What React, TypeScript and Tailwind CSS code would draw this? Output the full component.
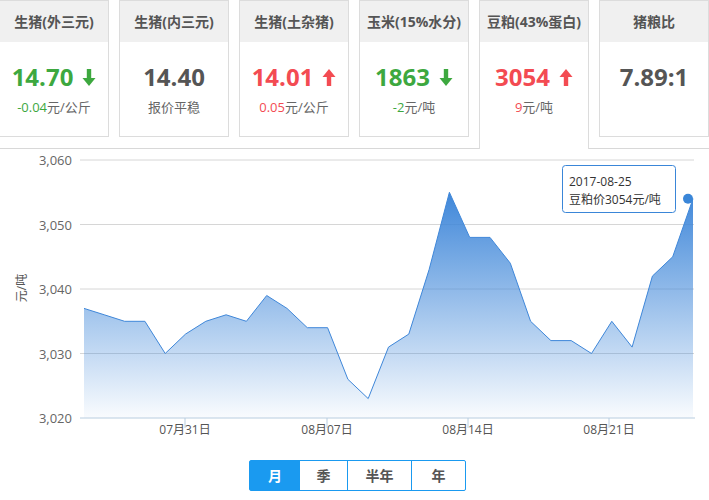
import React from "react";

const cards = [
  { t: "生猪(外三元)", v: "14.70", s: "-0.04", u: "元/公斤", c: "text-[#3da83f]", a: "down" },
  { t: "生猪(内三元)", v: "14.40", s: "", u: "报价平稳", c: "text-[#555]", a: "" },
  { t: "生猪(土杂猪)", v: "14.01", s: "0.05", u: "元/公斤", c: "text-[#f34b52]", a: "up" },
  { t: "玉米(15%水分)", v: "1863", s: "-2", u: "元/吨", c: "text-[#3da83f]", a: "down" },
  { t: "豆粕(43%蛋白)", v: "3054", s: "9", u: "元/吨", c: "text-[#f34b52]", a: "up", sel: true },
  { t: "猪粮比", v: "7.89:1", s: "", u: "", c: "text-[#555]", a: "" },
];

const vals = [3037,3036,3035,3035,3030,3033,3035,3036,3035,3039,3037,3034,3034,3026,3023,3031,3033,3043,3055,3048,3048,3044,3035,3032,3032,3030,3035,3031,3042,3045,3054];

function Arrow({ dir, color }: { dir: string; color: string }) {
  const up = dir === "up";
  return (
    <svg width="14" height="19" viewBox="0 0 14 19" className="ml-[9px]">
      {up ? (
        <path d="M7 1 L13.5 9 H9.2 V18 H4.8 V9 H0.5 Z" fill={color} />
      ) : (
        <path d="M7 18 L13.5 10 H9.2 V1 H4.8 V10 H0.5 Z" fill={color} />
      )}
    </svg>
  );
}

export default function App() {
  const X = (i: number) => 84 + i * 20.3;
  const Y = (v: number) => 160 + (3060 - v) * 6.45;
  const pts = vals.map((v, i) => `${X(i).toFixed(1)},${Y(v).toFixed(1)}`).join(" ");
  const area = `M${X(0)},418 L${pts.split(" ").join(" L")} L${X(30)},418 Z`;
  return (
    <div className="w-[709px] h-[500px] bg-white relative overflow-hidden" style={{ fontFamily: '"Open Sans","Noto Sans CJK SC",sans-serif' }}>
      <div className="flex h-[149px] border-b border-[#d8d8d8] ml-[-1px]">
        {cards.map((c, i) => (
          <div key={i} className={`w-[110px] shrink-0 ${i < 5 ? "mr-[10px]" : ""} ${c.sel ? "h-[149px] border border-b-0 border-[#dcdcdc] bg-white mb-[-1px]" : "h-[137px] border border-[#dcdcdc]"}`}>
            <div className="h-[41px] bg-[#f0f0f0] flex items-center justify-center text-[14px] font-bold text-[#555]">{c.t}</div>
            <div className={`mt-[20px] flex items-center justify-center text-[24px] font-bold ${c.c} leading-[30px]`}>
              {c.v}
              {c.a && <Arrow dir={c.a} color={c.a === "up" ? "#f34b52" : "#3da83f"} />}
            </div>
            <div className="mt-[6px] text-center text-[13px] text-[#666]">
              {c.s && <span className={c.c}>{c.s}</span>}
              {c.u}
            </div>
          </div>
        ))}
      </div>
      <svg width="709" height="440" viewBox="0 150 709 440" className="absolute left-0 top-[150px]" style={{ fontFamily: '"Open Sans","Noto Sans CJK SC",sans-serif' }}>
        <defs>
          <linearGradient id="g" x1="0" y1="0" x2="0" y2="1">
            <stop offset="0%" stopColor="#3f87d9" stopOpacity="1" />
            <stop offset="100%" stopColor="#3f87d9" stopOpacity="0.03" />
          </linearGradient>
        </defs>
        {[3060, 3050, 3040, 3030].map((v) => (
          <line key={v} x1="80" x2="694" y1={Y(v)} y2={Y(v)} stroke="#d6d6d6" />
        ))}
        {[3060, 3050, 3040, 3030, 3020].map((v) => (
          <text key={v} x="72" y={Y(v) + 5} textAnchor="end" fontSize="13" fill="#666">{(v / 1000).toFixed(3).replace(".", ",")}</text>
        ))}
        <path d={area} fill="url(#g)" />
        <polyline points={pts} fill="none" stroke="#3f87d9" strokeWidth="1" />
        <line x1="80" x2="695" y1="418" y2="418" stroke="#b8cde0" />
        {[["07月31日", 185], ["08月07日", 327], ["08月14日", 468], ["08月21日", 609]].map(([t, x]) => (
          <g key={t as string}>
            <line x1={x as number} x2={x as number} y1="418" y2="428" stroke="#b8cde0" />
            <text x={x as number} y="434" textAnchor="middle" fontSize="12" fill="#555">{t}</text>
          </g>
        ))}
        <text x="0" y="0" fontSize="12" fill="#555" transform="translate(26,288) rotate(-90)" textAnchor="middle">元/吨</text>
        <circle cx="688" cy={Y(3054)} r="5" fill="#3a86d8" />
        <rect x="562.5" y="165.5" width="113" height="47" rx="3" fill="white" stroke="#3a86d8" />
        <text x="569" y="186" fontSize="12" fill="#333">2017-08-25</text>
        <text x="569" y="204" fontSize="12" fill="#333">豆粕价3054元/吨</text>
      </svg>
      <div className="absolute left-[249px] top-[460px] flex h-[31px] border border-[#1a9af0] rounded-[2px] text-[14px] font-bold text-[#555]">
        <div className="w-[50px] flex items-center justify-center bg-[#1a9af0] text-white">月</div>
        <div className="w-[48px] flex items-center justify-center border-r border-[#1a9af0]">季</div>
        <div className="w-[64px] flex items-center justify-center border-r border-[#1a9af0]">半年</div>
        <div className="w-[53px] flex items-center justify-center">年</div>
      </div>
    </div>
  );
}
